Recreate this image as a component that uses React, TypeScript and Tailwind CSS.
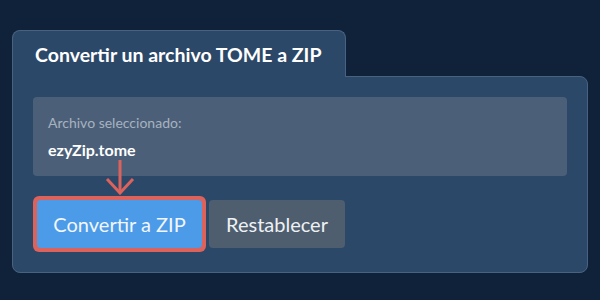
import React from 'react';

export default function App() {
  return (
    <div className="w-[600px] h-[300px] bg-[#0f2239] pt-[30px] px-3 font-['Lato','Liberation_Sans',sans-serif]">
      <div className="flex flex-col items-start">
        <div className="relative z-10 -mb-px w-[334px] h-[47px] bg-[#2c4868] border border-b-0 border-[#4a6282] rounded-t-lg pl-[22px] pt-[12px]">
          <h1 className="text-[19.5px] font-bold text-white leading-[24px]">Convertir un archivo TOME a ZIP</h1>
        </div>
        <div className="w-[576px] bg-[#2c4868] border border-[#4a6282] rounded-b-lg rounded-tr-lg px-5 pt-5 pb-5">
          <div className="h-[79px] bg-[#4b6078] rounded px-[15px] pt-[17px]">
            <div className="text-[14px] text-[#a7b2c0] leading-[18px]">Archivo seleccionado:</div>
            <div className="mt-[8px] text-[16px] font-bold text-white leading-[20px]">ezyZip.tome</div>
          </div>
          <div className="flex items-center gap-[3px] mt-5">
            <div className="relative p-1 bg-[#dc625c] rounded-md">
              <svg className="absolute left-1/2 -translate-x-1/2 bottom-full mb-[1px]" width="30" height="35" viewBox="0 0 30 35" fill="none" stroke="#dc625c" strokeWidth="3">
                <path d="M15 0 V33" />
                <path d="M2 19 L15 33 L28 19" />
              </svg>
              <button className="w-[165px] h-12 bg-[#4c9be8] rounded text-[20px] text-[#f2f6fb] leading-none">Convertir a ZIP</button>
            </div>
            <button className="w-[136px] h-12 bg-[#4e5e6f] rounded text-[20px] text-[#eef1f4] leading-none">Restablecer</button>
          </div>
        </div>
      </div>
    </div>
  );
}
